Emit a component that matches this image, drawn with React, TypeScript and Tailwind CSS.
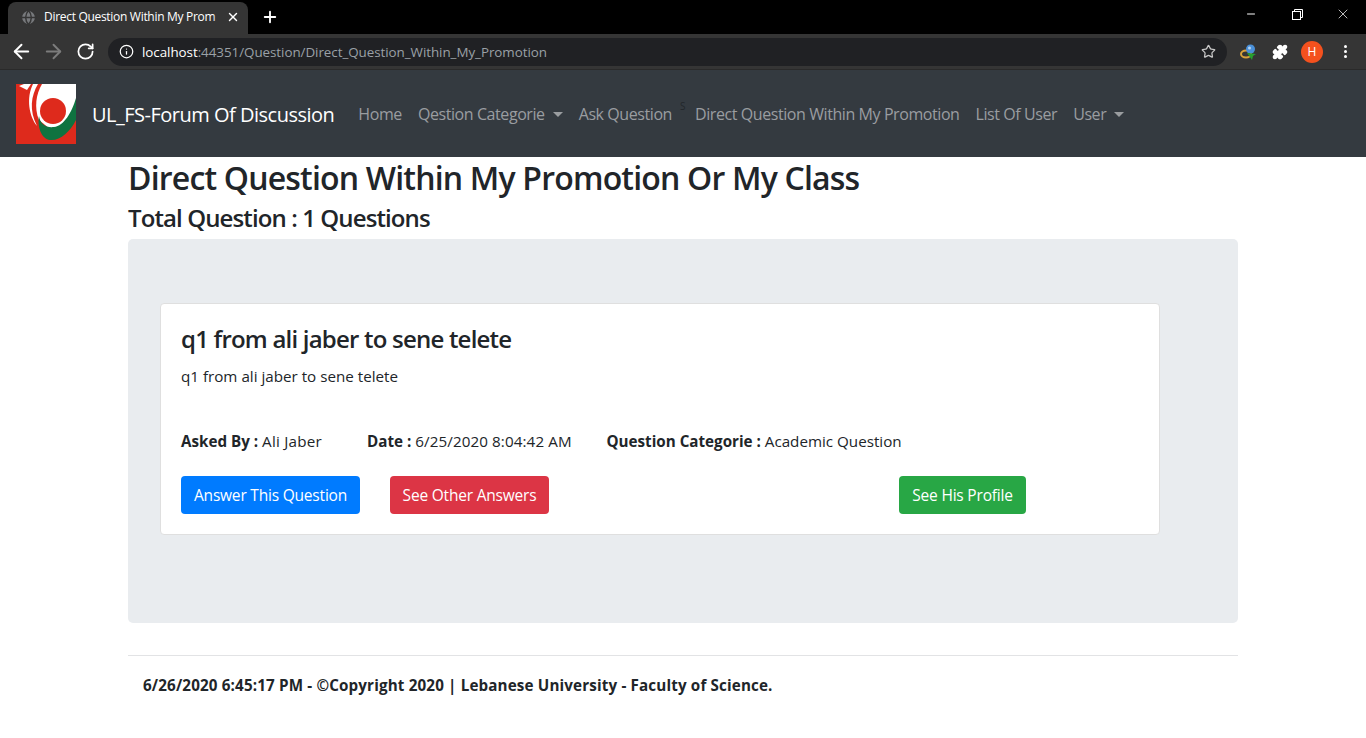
import { ArrowLeft, ArrowRight, RotateCw, Info, Star, Puzzle, X, Plus, Minus, Globe } from "lucide-react";

function Caret() {
  return <span className="ml-2 inline-block w-0 h-0 border-x-[5px] border-x-transparent border-t-[5px] border-t-[#9a9da0] align-[3px]" />;
}

function UlLogo() {
  return (
    <svg width="60" height="60" viewBox="0 0 60 60" className="shrink-0">
      <rect width="60" height="60" fill="#de2a1c" />
      <path d="M3 2L8 0H15L11 6Z" fill="#fff" />
      <path d="M17 0H22C15 12 13 26 21 42C13 32 10 14 17 0Z" fill="#fff" />
      <path d="M26 0H60V30L40 50L23 36C18 24 20 10 26 0Z" fill="#fff" />
      <circle cx="37" cy="27" r="13" fill="#de2a1c" />
      <path d="M23 32C24 40 30 44 38 43C48 42 56 28 60 14V36C54 48 44 57 34 56C26 55 21 44 23 32Z" fill="#0f7340" />
    </svg>
  );
}

function DownloadIcon() {
  return (
    <svg width="18" height="16" viewBox="0 0 18 16" className="ml-[13px] shrink-0">
      <ellipse cx="6" cy="10" rx="5" ry="3.5" fill="none" stroke="#d9a23a" strokeWidth="2" />
      <circle cx="10.5" cy="5" r="4.5" fill="#4a90d9" />
      <circle cx="9.5" cy="4" r="1.5" fill="#b8d4ef" />
      <path d="M7 9L16 10L13 12L12 16Z" fill="#27a02f" />
    </svg>
  );
}

function ChromeBar() {
  return (
    <div className="bg-black">
      <div className="h-[34px] flex items-end">
        <div className="relative ml-2 w-[240px] h-[32px] bg-[#353535] rounded-t-lg flex items-center pl-3 pr-2 pb-[2px] gap-[7px]">
          <Globe size={17} fill="#77797c" className="text-[#353535] shrink-0" />
          <span className="flex-1 whitespace-nowrap text-white text-[12px] font-['Open_Sans',sans-serif] tracking-[-0.3px]">Direct Question Within My Prom</span>
          <span className="absolute left-[205px] top-0 w-[12px] h-full bg-gradient-to-r from-transparent to-[#353535]" />
          <X size={14} strokeWidth={2.4} className="relative text-white shrink-0" />
        </div>
        <Plus size={18} strokeWidth={2.5} className="text-white ml-[13px] mb-[8px]" />
        <div className="ml-auto flex items-start h-full text-white self-start">
          <div className="w-[46px] flex justify-center pt-[8px]"><Minus size={12} /></div>
          <div className="w-[46px] flex justify-center pt-[9px]">
            <svg width="11" height="11" viewBox="0 0 11 11" fill="none" stroke="#fff"><rect x="0.5" y="2.5" width="8" height="8" /><path d="M2.5 2.5V0.5H10.5V8.5H8.5" /></svg>
          </div>
          <div className="w-[46px] flex justify-center pt-[6px]"><X size={16} strokeWidth={1.1} /></div>
        </div>
      </div>
      <div className="h-[36px] bg-[#353535] border-b border-[#2a2a2a] flex items-center pl-[10px] pr-[19px]">
        <ArrowLeft size={23} strokeWidth={2} className="text-white shrink-0" />
        <ArrowRight size={23} strokeWidth={2} className="text-[#7c7c7c] ml-[9px] shrink-0" />
        <RotateCw size={19} strokeWidth={2.2} className="text-white ml-[11px] shrink-0" />
        <div className="ml-[13px] flex-1 h-[28px] rounded-full bg-[#202124] flex items-center pl-[11px] pr-[11px]">
          <Info size={15} className="text-white shrink-0" />
          <span className="ml-[8px] pt-[1px] text-[13.4px] font-['Open_Sans',sans-serif] tracking-[-0.05px] text-[#9aa0a6]"><span className="text-white">localhost</span>:44351/Question/Direct_Question_Within_My_Promotion</span>
          <Star size={15} className="text-[#c8c8c8] ml-auto shrink-0" />
        </div>
        <DownloadIcon />
        <Puzzle size={16} fill="#fff" className="text-white ml-[14px] shrink-0" />
        <div className="ml-[13px] w-[22px] h-[22px] rounded-full bg-[#f4511e] text-white text-[12px] flex items-center justify-center font-['Open_Sans',sans-serif]">H</div>
        <div className="ml-[21px] flex flex-col gap-[2px]">
          <span className="w-[3px] h-[3px] rounded-full bg-white" />
          <span className="w-[3px] h-[3px] rounded-full bg-white" />
          <span className="w-[3px] h-[3px] rounded-full bg-white" />
        </div>
      </div>
    </div>
  );
}

export default function App() {
  return (
    <div className="min-h-[738px] bg-white text-[#212529] font-['Open_Sans','Noto_Sans',sans-serif] overflow-hidden">
      <ChromeBar />

      {/* navbar */}
      <nav className="h-[87px] bg-[#343a40] flex items-center pl-4">
        <UlLogo />
        <span className="ml-4 pt-[2px] text-[20px] text-white tracking-[-0.5px] whitespace-nowrap">UL_FS-Forum Of Discussion</span>
        <div className="ml-4 flex items-center text-[16px] text-[#9a9da0] tracking-[-0.42px] whitespace-nowrap">
          <span className="px-2">Home</span>
          <span className="px-2">Qestion Categorie<Caret /></span>
          <span className="px-2">Ask Question</span>
          <span className="w-[7px] -mt-[14px] text-[10px] text-[#23272b]">S</span>
          <span className="px-2">Direct Question Within My Promotion</span>
          <span className="px-2">List Of User</span>
          <span className="px-2">User<Caret /></span>
        </div>
      </nav>

      <main className="w-[1110px] mx-auto">
        <h2 className="text-[32px] leading-[38px] font-semibold mt-[2px] tracking-[-0.81px] whitespace-nowrap">Direct Question Within My Promotion Or My Class</h2>
        <h4 className="text-[24px] leading-[29px] font-semibold mt-[6px] tracking-[-0.89px]">Total Question : 1 Questions</h4>

        <div className="mt-[7px] h-[384px] bg-[#e9ecef] rounded-[5px] py-16 px-8">
          <div className="w-[1000px] h-[232px] bg-white border border-[#dfdfdf] rounded-[4px] p-5">
            <h4 className="text-[24px] leading-[29px] font-semibold tracking-[-0.79px]">q1 from ali jaber to sene telete</h4>
            <p className="mt-[11px] text-[15.2px] leading-[24px]">q1 from ali jaber to sene telete</p>

            <div className="mt-[41px] flex text-[15.2px] leading-[24px] whitespace-nowrap">
              <span className="w-[186px]"><b>Asked By :</b> <span className="tracking-[0.25px]">Ali Jaber</span></span>
              <span className="w-[239.5px]"><b>Date :</b> <span className="tracking-[0.1px]">6/25/2020 8:04:42 AM</span></span>
              <span><b>Question Categorie :</b> Academic Question</span>
            </div>

            <div className="mt-[23px] flex text-[15.5px] text-white tracking-[-0.2px]">
              <button className="w-[179px] h-[38px] pt-[1px] rounded-[4px] bg-[#007bff]">Answer This Question</button>
              <button className="ml-[30px] w-[159px] h-[38px] pt-[1px] rounded-[4px] bg-[#dc3545]">See Other Answers</button>
              <button className="ml-[350px] w-[127px] h-[38px] pt-[1px] rounded-[4px] bg-[#28a745]">See His Profile</button>
            </div>
          </div>
        </div>

        <hr className="mt-8 border-[#e2e3e5]" />
        <p className="mt-[17px] pl-[15px] text-[15.2px] leading-[24px] font-bold tracking-[0.15px]">6/26/2020 6:45:17 PM - ©Copyright 2020 | Lebanese University - Faculty of Science.</p>
      </main>
    </div>
  );
}
